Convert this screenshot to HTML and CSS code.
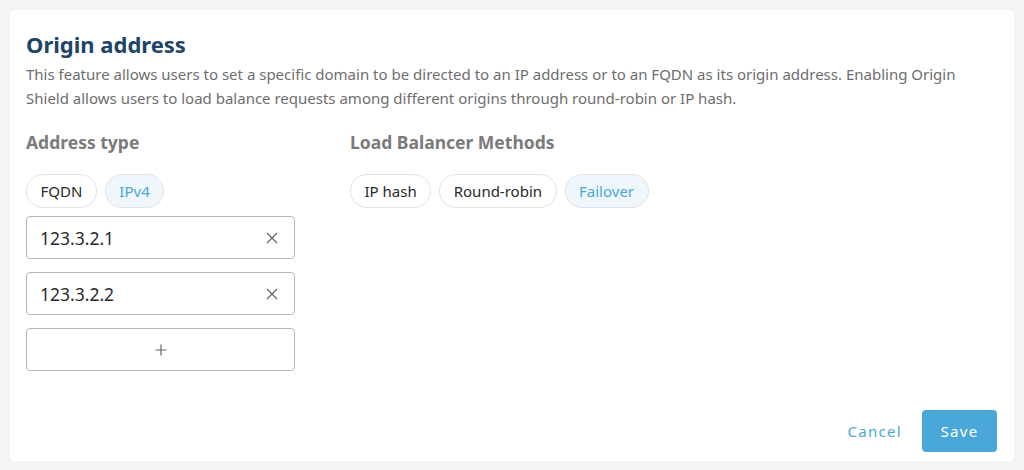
FILE: index.html
```html
<!DOCTYPE html>
<html>
<head>
<meta charset="utf-8">
<link rel="stylesheet" href="styles.css">
</head>
<body>
<div class="card">
  <h1 class="title">Origin address</h1>
  <p class="desc">This feature allows users to set a specific domain to be directed to an IP address or to an FQDN as its origin address. Enabling Origin Shield allows users to load balance requests among different origins through round-robin or IP hash.</p>
  <div class="cols">
    <div class="col col-left">
      <div class="label">Address type</div>
      <div class="chips">
        <span class="chip">FQDN</span>
        <span class="chip active">IPv4</span>
      </div>
      <div class="inputs">
        <div class="field"><span>123.3.2.1</span><svg class="icon" width="12" height="12" viewBox="0 0 12 12"><path d="M1 1L11 11M11 1L1 11" stroke="#666" stroke-width="1.3" fill="none"/></svg></div>
        <div class="field"><span>123.3.2.2</span><svg class="icon" width="12" height="12" viewBox="0 0 12 12"><path d="M1 1L11 11M11 1L1 11" stroke="#666" stroke-width="1.3" fill="none"/></svg></div>
        <div class="field add"><svg width="12" height="12" viewBox="0 0 12 12"><path d="M6 0.5V11.5M0.5 6H11.5" stroke="#666" stroke-width="1.2" fill="none"/></svg></div>
      </div>
    </div>
    <div class="col">
      <div class="label">Load Balancer Methods</div>
      <div class="chips">
        <span class="chip">IP hash</span>
        <span class="chip">Round-robin</span>
        <span class="chip active">Failover</span>
      </div>
    </div>
  </div>
  <div class="actions">
    <button class="btn-cancel">Cancel</button>
    <button class="btn-save">Save</button>
  </div>
</div>
</body>
</html>
```

FILE: styles.css
```css
* { box-sizing: border-box; }
html, body { margin: 0; padding: 0; }
body {
  background: #f3f4f6;
  font-family: "Noto Sans", sans-serif;
  padding: 10px;
}
.card {
  background: #fff;
  border-radius: 5px;
  width: 1004px;
  height: 451px;
  padding: 20px 16px 0 16px;
  display: flex;
  flex-direction: column;
}
.title {
  margin: 0;
  font-size: 22px;
  line-height: 28px;
  font-weight: 700;
  color: #1e4468;
}
.desc {
  margin: 4px 0 0 0;
  font-size: 15px;
  line-height: 24px;
  color: #6e6e6e;
}
.cols {
  display: flex;
  margin-top: 20px;
}
.col-left { width: 324px; }
.label {
  font-size: 17.5px;
  font-weight: 700;
  color: #7b7b7b;
  line-height: 24px;
}
.chips {
  display: flex;
  gap: 8px;
  margin-top: 20px;
}
.chip {
  height: 34px;
  padding: 0 13.5px;
  border: 1px solid #e3e3e3;
  border-radius: 17px;
  font-size: 15px;
  line-height: 32px;
  color: #2a2a2a;
  background: #fff;
}
.chip.active {
  background: #eff7fc;
  color: #4aa8d8;
}
.inputs {
  display: flex;
  flex-direction: column;
  gap: 13px;
  margin-top: 8px;
  width: 269px;
}
.field {
  height: 43px;
  border: 1px solid #b8b8b8;
  border-radius: 4px;
  display: flex;
  align-items: center;
  justify-content: space-between;
  padding: 0 16px 0 13px;
  font-size: 17.5px;
  color: #2a2a2a;
}
.field .icon { display: block; }
.field.add {
  justify-content: center;
  padding: 0;
}
.actions {
  margin-top: auto;
  margin-bottom: 9px;
  display: flex;
  justify-content: flex-end;
  align-items: center;
  gap: 20px;
  padding-right: 1px;
}
button {
  font-family: "Noto Sans", sans-serif;
  font-size: 15px;
  letter-spacing: 1.3px;
  border: none;
  cursor: pointer;
}
.btn-cancel {
  background: none;
  color: #4aa8d8;
  padding: 0;
}
.btn-save {
  background: #4aa8d8;
  color: #fff;
  height: 42px;
  width: 75px;
  border-radius: 4px;
}
```
